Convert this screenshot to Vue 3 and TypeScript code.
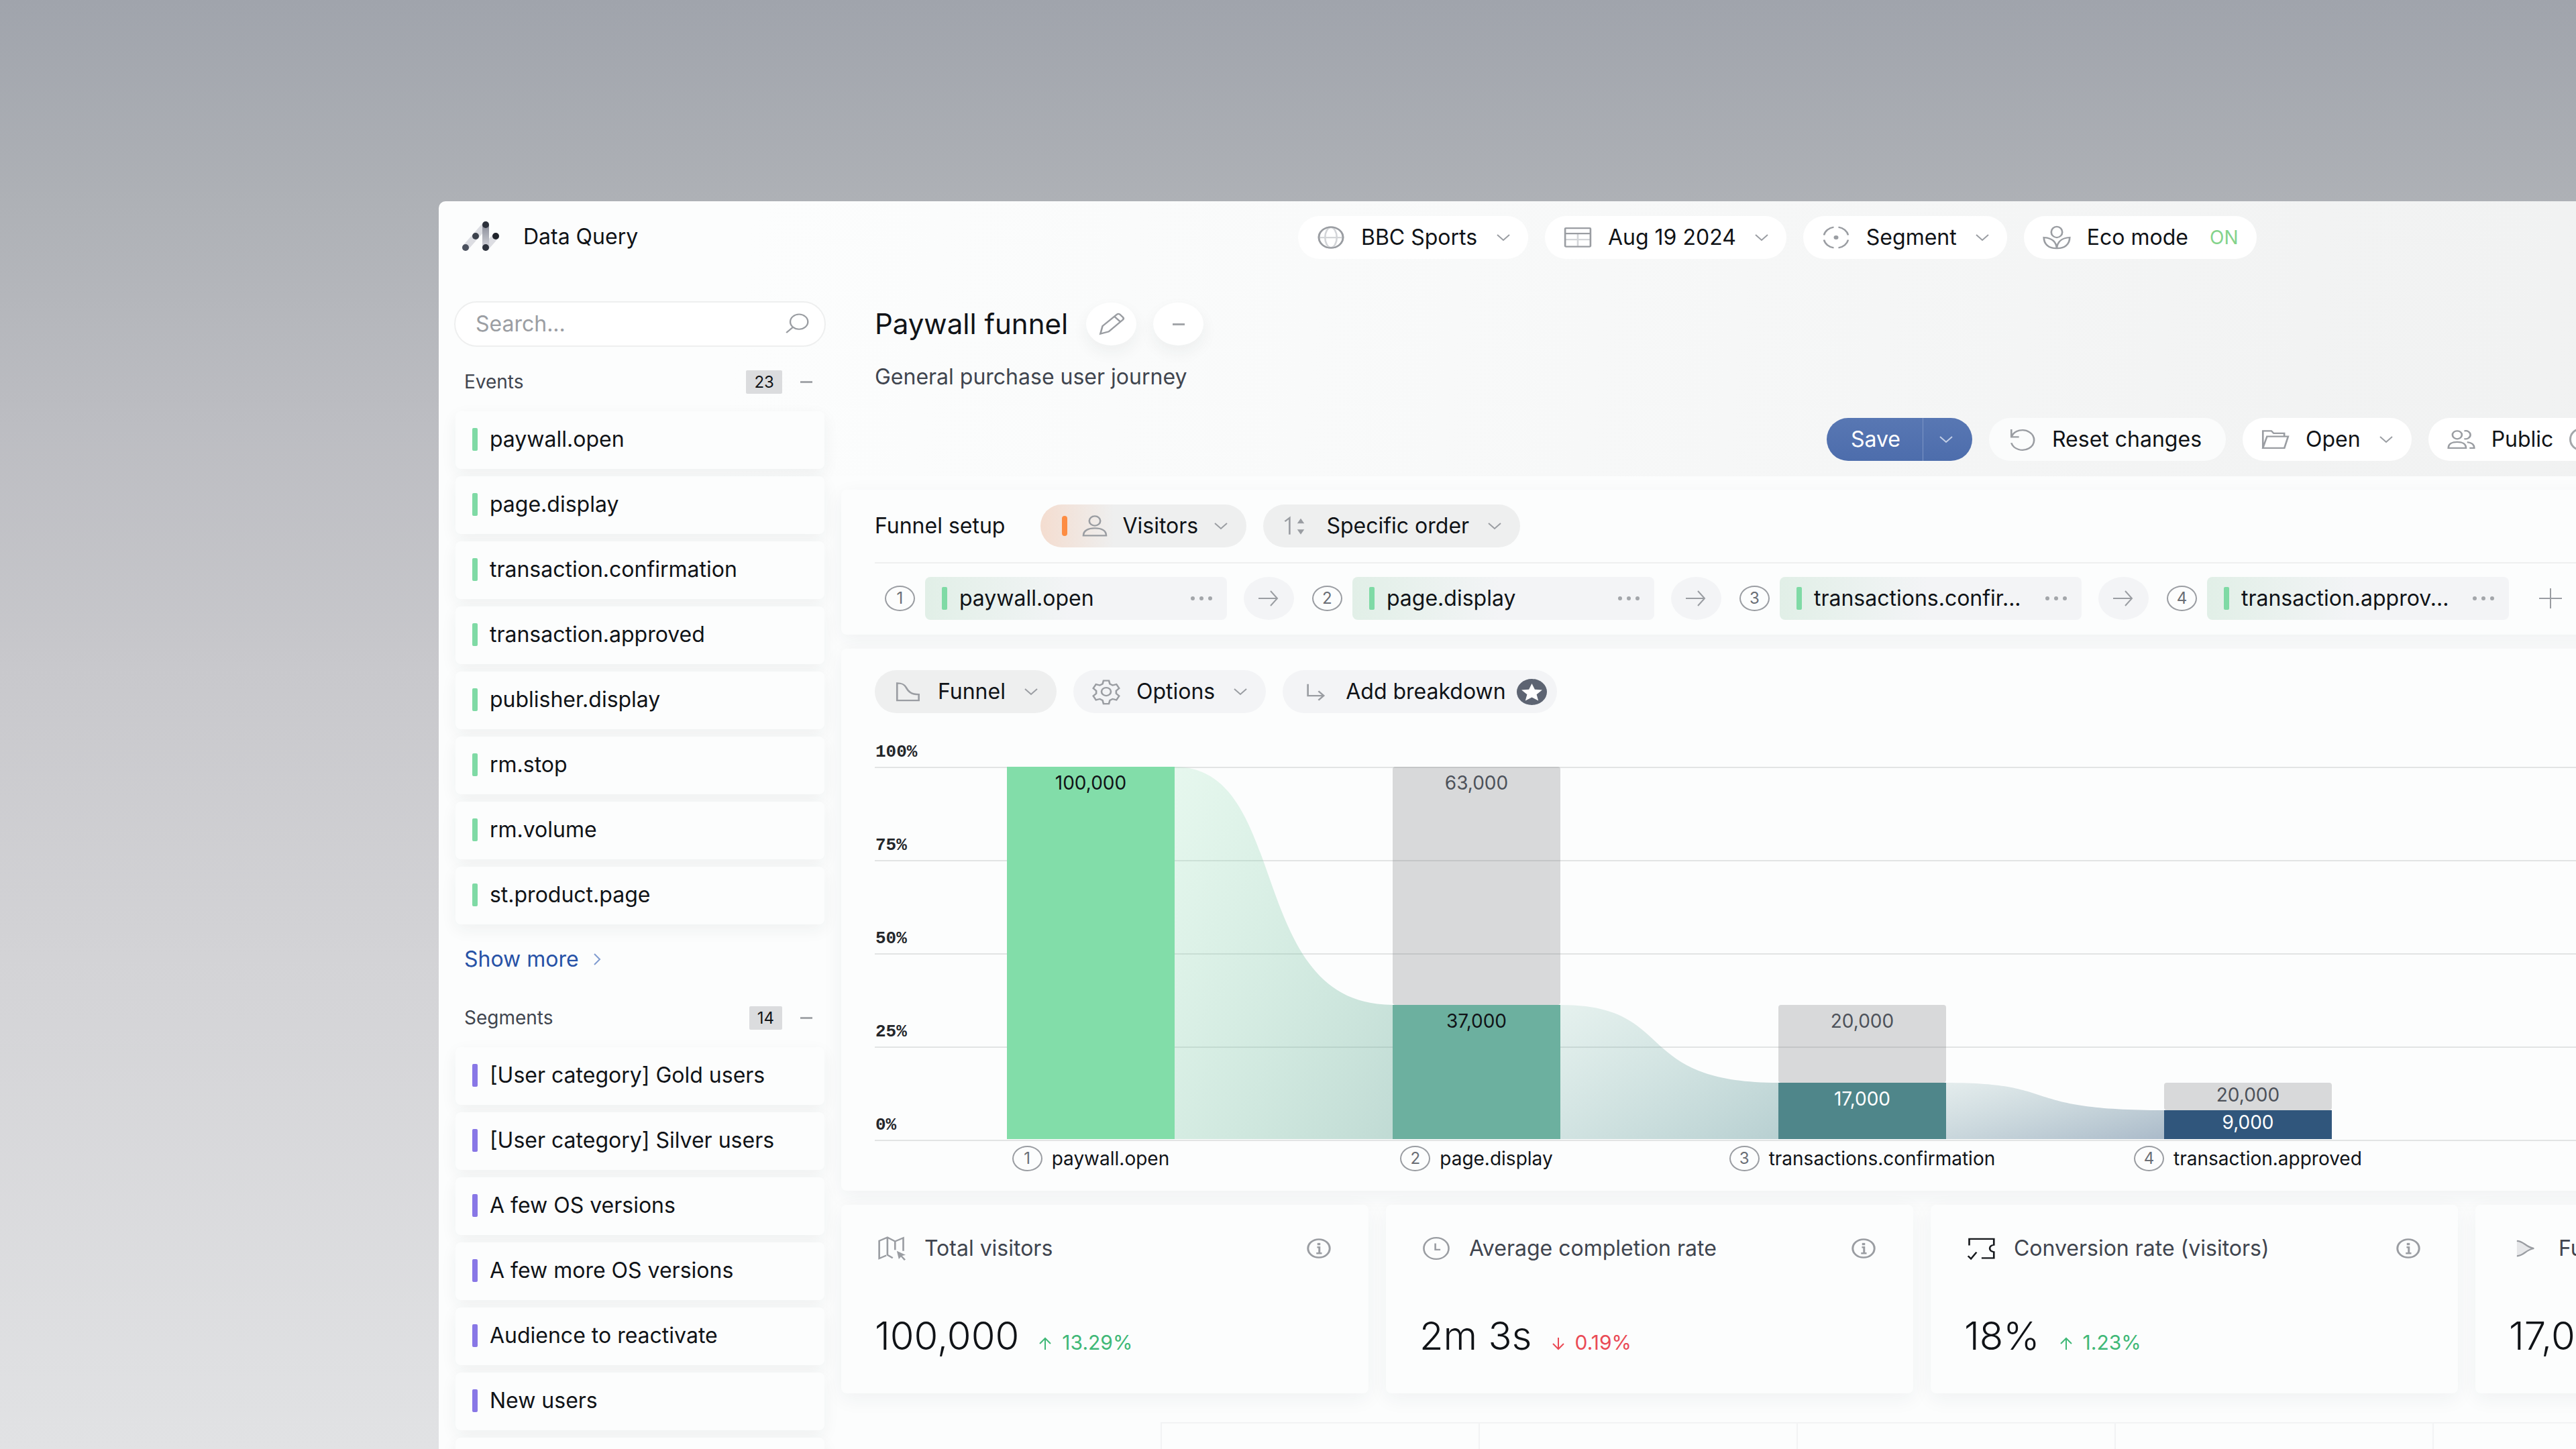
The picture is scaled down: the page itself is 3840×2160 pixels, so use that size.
<script setup lang="ts">
interface Step {
  name: string
  short: string
  top: number
  split: number
  dropped?: string
  kept: string
  color: string
  ink: string
}

interface Stat {
  title: string
  icon: string
  value: string
  change?: string
  dir?: 'up' | 'down'
}

const icons: Record<string, string> = {
  globe: '<circle cx="12" cy="12" r="10.3"/><g stroke="#d3d5d8"><ellipse cx="12" cy="12" rx="5" ry="10"/><path d="M2 12h20"/></g><circle cx="12" cy="12" r="10.3"/>',
  calendar: '<g stroke="#d3d5d8"><path d="M12 8v12.500M1.500 14h21"/></g><path d="M1.300 8h21.400"/><rect x="1.200" y="2.800" width="21.600" height="18.200" rx=".6"/>',
  target: '<path d="M10 1.700A10.300 10.300 0 0 0 1.700 9.700M14 1.700a10.300 10.300 0 0 1 8.300 8M1.700 14.300A10.300 10.300 0 0 0 10 22.300M22.300 14.300A10.300 10.300 0 0 1 14 22.300"/><circle cx="12" cy="12" r="2" fill="#9a9da2" stroke="none"/>',
  flower: '<ellipse cx="12" cy="6.600" rx="4.700" ry="5.400"/><path d="M12 22.800C11.500 16 8 12.500 1 12c0 7 4.500 11 11 10.800C18.500 23 23 19 23 12c-7 .5-10.500 4-11 10.800z"/>',
  search: '<circle cx="14" cy="9.500" r="8.300"/><path d="M8.200 15.600 2 21.800"/>',
  pencil: '<path d="M2.500 21.700 4.300 14 16.600 2.400q1.200-1 2.400 0l2.700 2.900q1 1.200 0 2.400L9.600 19.500zM14.400 4.500l5.200 5.400"/>',
  reset: '<path d="M3 2v7.500h6.500M3.200 9.200A9.900 9.900 0 1 1 3 15.500"/>',
  folder: '<path d="M1.300 20.500V3.500h7.200l2 2.400h9v3M1.300 20.500 4.800 9h18l-3.200 11.500z"/>',
  people: '<circle cx="8.500" cy="7.500" r="4"/><path d="M14.500 3.700a4 4 0 1 1 0 7.600M1 20.500c0-4 3.200-6 7.500-6s7.500 2 7.500 6zM17 14.700c3.600.3 6 2.400 6 5.800h-4"/>',
  person: '<circle cx="12" cy="7" r="4.700"/><path d="M2.300 21.500c0-5 4.200-7.300 9.700-7.300s9.700 2.300 9.700 7.300z"/>',
  order: '<path d="M2.500 7.500 6.500 4v16.500"/><path d="M16 4.500l3 5h-6zM16 20.500l3-5h-6z" fill="#9a9da2" stroke="none"/>',
  funnel: '<path d="M3 3.500v17.300h18.500v-6C15 14.800 12.500 12 10.500 7.500 9 4.500 7 3.500 3 3.500z"/>',
  gear: '<circle cx="12" cy="12" r="4"/><path d="M9.700 1h4.600l.8 3.400 2.300 1.300 3.300-1 2.300 4-2.500 2.400v2.800l2.500 2.400-2.300 4-3.300-1-2.300 1.300-.8 3.400H9.700l-.8-3.400-2.300-1.300-3.300 1-2.300-4 2.500-2.400v-2.800L1 8.700l2.300-4 3.300 1 2.300-1.300z"/>',
  branch: '<path d="M5.500 4.500V16h13M14.500 11.500 19 16l-4.500 4.500"/>',
  map: '<path d="M7.500 19 1.500 22V4.500L8.500 1l6.500 4 7-3.500v13M8.500 1v17.500l4.500 3M15 5v8.500"/><path d="M16.500 14.500l7.500 4-3 .8 3 3.700-1.200 1-2.800-3.700-1.800 2.400z" fill="#9a9da2" stroke="none"/>',
  clock: '<circle cx="12" cy="12" r="10.600"/><path d="M11.200 7v6.200h4.300"/>',
  ticket: '<g stroke="#15181c"><path d="M2 9V2.500h21v6q-3.500.6-3.500 3.500t3.500 3.500v6H12.500M1 19.500l2.500 2.800 4.700-6.500"/></g>',
  flow: '<path d="M4.500 4.500c6 0 7 6 14.500 7.500-7.500 1.500-8.500 7.500-14.500 7.500z" fill="#e6e7e9" stroke="none"/><path d="M4.500 4.500c6 0 7 6 14.500 7.500-7.500 1.500-8.500 7.500-14.500 7.500"/>',
  info: '<circle cx="12" cy="12" r="10.800" stroke-width="2"/><path d="M10.300 10.500h2.200v7.200M9.500 17.700h5.500" stroke-width="2"/><path d="M12 5.500v2.700" stroke-width="3"/>',
}

const events: string[] = [
  'paywall.open', 'page.display', 'transaction.confirmation', 'transaction.approved',
  'publisher.display', 'rm.stop', 'rm.volume', 'st.product.page',
]
const segments: string[] = [
  '[User category] Gold users', '[User category] Silver users', 'A few OS versions',
  'A few more OS versions', 'Audience to reactivate', 'New users',
]

const BAR = 250
const PITCH = 575
const FIRST = 197
const BASE = 555
const steps: Step[] = [
  { name: 'paywall.open', short: 'paywall.open', top: 0, split: 0, kept: '100,000', color: '#82dda9', ink: '#101317' },
  { name: 'page.display', short: 'page.display', top: 0, split: 355, dropped: '63,000', kept: '37,000', color: '#6cb09f', ink: '#101317' },
  { name: 'transactions.confirmation', short: 'transactions.confir...', top: 355, split: 471, dropped: '20,000', kept: '17,000', color: '#4f868a', ink: '#ffffff' },
  { name: 'transaction.approved', short: 'transaction.approv...', top: 471, split: 512, dropped: '20,000', kept: '9,000', color: '#30567c', ink: '#ffffff' },
]
const ticks: string[] = ['100%', '75%', '50%', '25%', '0%']

const barX = (i: number): number => FIRST + i * PITCH
const labelY = (top: number, bottom: number): number => top + (bottom - top < 50 ? 28 : 34)

/* Area joining the kept part of one bar to the kept part of the next one. */
function flowPath(i: number): string {
  const x0 = barX(i) + BAR
  const x1 = barX(i + 1)
  const w = x1 - x0
  const a = steps[i].split
  const b = steps[i + 1].split
  return `M${x0} ${a}C${x0 + w * 0.54} ${a} ${x0 + w * 0.32} ${b} ${x1} ${b}V${BASE}H${x0}Z`
}

const flows = [
  { from: '#82dda9', fromOp: 0.18, to: '#5fa392', toOp: 0.38 },
  { from: '#6cb09f', fromOp: 0.16, to: '#3f7f84', toOp: 0.36 },
  { from: '#4f868a', fromOp: 0.14, to: '#30567c', toOp: 0.4 },
]

const stats: Stat[] = [
  { title: 'Total visitors', icon: 'map', value: '100,000', change: '13.29%', dir: 'up' },
  { title: 'Average completion rate', icon: 'clock', value: '2m 3s', change: '0.19%', dir: 'down' },
  { title: 'Conversion rate (visitors)', icon: 'ticket', value: '18%', change: '1.23%', dir: 'up' },
  { title: 'Funnel', icon: 'flow', value: '17,000' },
]
</script>

<template>
  <div class="page">
    <div class="window">
      <header class="topbar">
        <div class="brand">
          <svg class="logo" viewBox="0 0 56 46" aria-hidden="true">
            <defs>
              <linearGradient id="stem" x1="0" y1="0" x2="0" y2="1">
                <stop offset="0" stop-color="#8a8d99" /><stop offset="1" stop-color="#d3d4da" />
              </linearGradient>
            </defs>
            <g stroke="#dcdde2" stroke-width="10" stroke-linecap="round">
              <path d="M6 39 36 5M36 39 51 22" />
            </g>
            <rect x="31" y="5" width="10" height="34" fill="url(#stem)" />
            <circle cx="6" cy="39" r="5" fill="#4b515e" /><circle cx="21" cy="22" r="5" fill="#3b414c" />
            <circle cx="36" cy="5" r="5" fill="#2c313b" /><circle cx="36" cy="39" r="5" fill="#2c313b" />
            <circle cx="51" cy="22" r="5" fill="#20242c" />
          </svg>
          <span>Data Query</span>
        </div>
        <nav class="filters" aria-label="Filters">
          <label class="pill">
            <svg class="icon" viewBox="0 0 24 24" preserveAspectRatio="none" v-html="icons.globe" />
            <select aria-label="Site"><option>BBC Sports</option></select>
            <svg class="chev" viewBox="0 0 20 10"><path d="M1 1l9 8 9-8" /></svg>
          </label>
          <button type="button" class="pill">
            <svg class="icon" viewBox="0 0 24 24" preserveAspectRatio="none" v-html="icons.calendar" />
            <span>Aug 19 2024</span>
            <svg class="chev" viewBox="0 0 20 10"><path d="M1 1l9 8 9-8" /></svg>
          </button>
          <label class="pill">
            <svg class="icon" viewBox="0 0 24 24" preserveAspectRatio="none" v-html="icons.target" />
            <select aria-label="Segment"><option>Segment</option></select>
            <svg class="chev" viewBox="0 0 20 10"><path d="M1 1l9 8 9-8" /></svg>
          </label>
          <button type="button" class="pill" aria-pressed="true">
            <svg class="icon" viewBox="0 0 24 24" preserveAspectRatio="none" v-html="icons.flower" />
            <span>Eco mode</span>
            <span class="on">ON</span>
          </button>
        </nav>
      </header>

      <div class="columns">
        <aside class="sidebar">
          <label class="search">
            <input type="text" placeholder="Search..." aria-label="Search" />
            <svg class="icon small" viewBox="0 0 24 24" preserveAspectRatio="none" v-html="icons.search" />
          </label>

          <div class="group-head">
            <span>Events</span>
            <span class="count">23</span>
            <button type="button" class="minus" aria-label="Collapse events"></button>
          </div>
          <ul class="items">
            <li v-for="e in events" :key="e"><i class="mark green"></i>{{ e }}</li>
          </ul>
          <a href="#" class="more">Show more
            <svg viewBox="0 0 10 18"><path d="M1 1l8 8-8 8" /></svg>
          </a>

          <div class="group-head">
            <span>Segments</span>
            <span class="count">14</span>
            <button type="button" class="minus" aria-label="Collapse segments"></button>
          </div>
          <ul class="items">
            <li v-for="s in segments" :key="s"><i class="mark violet"></i>{{ s }}</li>
            <li aria-hidden="true"></li>
          </ul>
        </aside>

        <main class="main">
          <div class="head">
            <div class="title-row">
              <h1>Paywall funnel</h1>
              <button type="button" class="round" aria-label="Rename">
                <svg class="icon" viewBox="0 0 24 24" preserveAspectRatio="none" v-html="icons.pencil" />
              </button>
              <button type="button" class="round" aria-label="Collapse"><i class="dash"></i></button>
            </div>
            <p class="subtitle">General purchase user journey</p>
            <div class="actions">
              <div class="save">
                <button type="button" class="save-main">Save</button>
                <button type="button" class="save-more" aria-label="More save options">
                  <svg class="chev" viewBox="0 0 20 10"><path d="M1 1l9 8 9-8" /></svg>
                </button>
              </div>
              <button type="button" class="pill faint">
                <svg class="icon" viewBox="0 0 24 24" preserveAspectRatio="none" v-html="icons.reset" />
                <span>Reset changes</span>
              </button>
              <button type="button" class="pill">
                <svg class="icon" viewBox="0 0 24 24" preserveAspectRatio="none" v-html="icons.folder" />
                <span>Open</span>
                <svg class="chev" viewBox="0 0 20 10"><path d="M1 1l9 8 9-8" /></svg>
              </button>
              <label class="pill">
                <svg class="icon" viewBox="0 0 24 24" preserveAspectRatio="none" v-html="icons.people" />
                <span>Public</span>
                <input type="checkbox" class="switch" />
              </label>
            </div>
          </div>

          <section class="card setup">
            <div class="setup-row">
              <h2>Funnel setup</h2>
              <label class="pill grey visitors">
                <i class="mark orange"></i>
                <svg class="icon" viewBox="0 0 24 24" preserveAspectRatio="none" v-html="icons.person" />
                <select aria-label="Counted unit"><option>Visitors</option></select>
                <svg class="chev" viewBox="0 0 20 10"><path d="M1 1l9 8 9-8" /></svg>
              </label>
              <label class="pill grey">
                <svg class="icon" viewBox="0 0 24 24" preserveAspectRatio="none" v-html="icons.order" />
                <select aria-label="Step order"><option>Specific order</option></select>
                <svg class="chev" viewBox="0 0 20 10"><path d="M1 1l9 8 9-8" /></svg>
              </label>
            </div>
            <div class="steps">
              <template v-for="(s, i) in steps" :key="s.name">
                <span class="num">{{ i + 1 }}</span>
                <div class="chip">
                  <i class="mark green"></i>
                  <span class="chip-name">{{ s.short }}</span>
                  <button type="button" class="dots" :aria-label="'Options for ' + s.name">
                    <svg viewBox="0 0 32 6"><circle cx="3" cy="3" r="3" /><circle cx="16" cy="3" r="3" /><circle cx="29" cy="3" r="3" /></svg>
                  </button>
                </div>
                <span v-if="i < steps.length - 1" class="arrow">
                  <svg viewBox="0 0 30 24"><path d="M0 12h28M18 1l10 11-10 11" /></svg>
                </span>
              </template>
              <button type="button" class="plus" aria-label="Add step">
                <svg viewBox="0 0 34 30"><path d="M0 15h34M17 0v30" /></svg>
              </button>
            </div>
          </section>

          <section class="card chart">
            <div class="chart-tools">
              <label class="pill grey">
                <svg class="icon" viewBox="0 0 24 24" preserveAspectRatio="none" v-html="icons.funnel" />
                <select aria-label="Chart type"><option>Funnel</option></select>
                <svg class="chev" viewBox="0 0 20 10"><path d="M1 1l9 8 9-8" /></svg>
              </label>
              <button type="button" class="pill cool">
                <svg class="icon" viewBox="0 0 24 24" preserveAspectRatio="none" v-html="icons.gear" />
                <span>Options</span>
                <svg class="chev" viewBox="0 0 20 10"><path d="M1 1l9 8 9-8" /></svg>
              </button>
              <button type="button" class="pill cool add">
                <svg class="icon" viewBox="0 0 24 24" preserveAspectRatio="none" v-html="icons.branch" />
                <span>Add breakdown</span>
                <svg class="star" viewBox="0 0 45 39">
                  <ellipse cx="22.500" cy="19.500" rx="22.500" ry="19.500" fill="#5d6472" />
                  <path d="M22.500 7l4.400 8.700 11 .9-8.300 6.600 2.600 9.300-9.700-4.900-9.700 4.900 2.600-9.300-8.300-6.600 11-.9z" fill="#fff" />
                </svg>
              </button>
            </div>
            <svg class="plot" height="600" aria-label="Funnel chart">
              <defs>
                <linearGradient v-for="(f, i) in flows" :id="'flow' + i" :key="i" x1="0" y1="0" x2="1" y2="1">
                  <stop offset="0" :stop-color="f.from" :stop-opacity="f.fromOp" />
                  <stop offset="1" :stop-color="f.to" :stop-opacity="f.toOp" />
                </linearGradient>
              </defs>
              <g transform="translate(0 40)">
                <g v-for="(t, i) in ticks" :key="t">
                  <rect x="0" :y="i * 139" width="100%" height="2" fill="#e2e4e4" />
                  <text class="tick" x="1" :y="i * 139 - 15">{{ t }}</text>
                </g>
                <path v-for="(f, i) in flows" :key="i" :d="flowPath(i)" :fill="`url(#flow${i})`" />
                <g v-for="(s, i) in steps" :key="s.name">
                  <template v-if="s.dropped">
                    <rect :x="barX(i)" :y="s.top" :width="BAR" :height="s.split - s.top" rx="4" fill="#5a5d60" fill-opacity=".22" />
                    <text class="val" :x="barX(i) + BAR / 2" :y="labelY(s.top, s.split)" fill="#4d525a">{{ s.dropped }}</text>
                  </template>
                  <rect :x="barX(i)" :y="s.split" :width="BAR" :height="BASE - s.split" :fill="s.color" />
                  <text class="val" :x="barX(i) + BAR / 2" :y="labelY(s.split, BASE)" :fill="s.ink">{{ s.kept }}</text>
                </g>
              </g>
            </svg>
            <div class="names">
              <div v-for="(s, i) in steps" :key="s.name" class="name">
                <span class="num">{{ i + 1 }}</span>{{ s.name }}
              </div>
            </div>
          </section>

          <div class="stats">
            <section v-for="s in stats" :key="s.title" class="card stat">
              <div class="stat-head">
                <svg class="icon" viewBox="0 0 24 24" preserveAspectRatio="none" v-html="icons[s.icon]" />
                <h3>{{ s.title }}</h3>
                <svg class="icon info" viewBox="0 0 24 24" preserveAspectRatio="none" v-html="icons.info" />
              </div>
              <div class="stat-value">
                <strong>{{ s.value }}</strong>
                <span v-if="s.change" class="change" :class="s.dir">
                  <svg viewBox="0 0 18 18">
                    <path :d="s.dir === 'up' ? 'M9 18V1M1 9l8-8 8 8' : 'M9 0v17M1 9l8 8 8-8'" />
                  </svg>
                  {{ s.change }}
                </span>
              </div>
            </section>
          </div>

          <div class="sheet">
            <div v-for="n in 6" :key="n" class="cell"></div>
          </div>
        </main>
      </div>
    </div>
  </div>
</template>

<style>
body {
  background: #e1e2e4;
}
</style>

<style scoped>
.page {
  box-sizing: border-box;
  height: 100vh;
  overflow: hidden;
  padding-top: 300px;
  background: linear-gradient(180deg, #a0a4ac 0%, #aeb1b6 14%, #bbbcc1 28%, #c8c8cc 46%, #d3d3d6 66%, #e1e2e4 100%);
  font-family: Inter, "Liberation Sans", sans-serif;
  font-size: 32px;
  line-height: 40px;
  color: #101317;
}
.page *,
.page *::before {
  box-sizing: border-box;
}
.window {
  margin-left: 17.03vw;
  margin-right: -662px;
  min-height: 2000px;
  border-radius: 10px 0 0 0;
  background: linear-gradient(97deg, #fcfdfd 12%, #f9fafa 34%, #f2f3f3 72%, #eff0f0 100%) 0 0 / 100% 410px no-repeat, #fcfdfd;
}
h1, h2, h3, p, ul {
  margin: 0;
  padding: 0;
  font-weight: 400;
}
button, select, input {
  margin: 0;
  padding: 0;
  border: 0;
  background: none;
  font: inherit;
  color: inherit;
}
select {
  appearance: none;
  line-height: 40px;
}
svg {
  flex: none;
  fill: none;
  overflow: visible;
}
.icon {
  width: 42px;
  height: 36px;
  stroke: #9a9da2;
  stroke-width: 1.5px;
}
.icon.small {
  width: 38px;
  height: 32px;
}
.icon.info {
  width: 36px;
  height: 30px;
}
.chev {
  width: 20px;
  height: 10px;
  margin-left: 4px;
  stroke: #9a9da2;
  stroke-width: 2px;
}
.topbar {
  display: flex;
  align-items: flex-start;
  padding: 22px 0 0 34px;
  height: 108px;
}
.brand {
  display: flex;
  align-items: center;
  gap: 36px;
  flex: 0 0 1247px;
  height: 64px;
  padding-bottom: 2px;
}
.logo {
  width: 56px;
  height: 46px;
}
.filters {
  display: flex;
  gap: 25px;
}
.pill {
  display: flex;
  align-items: center;
  gap: 24px;
  height: 64px;
  padding: 0 28px;
  border-radius: 32px;
  background: #fff;
  white-space: nowrap;
}
.filters .pill {
  padding: 0 27px 0 28px;
}
.pill.faint {
  padding-right: 36px;
  background: #fbfcfc;
}
.pill.grey {
  background: #eeefef;
}
.pill.cool {
  background: #f3f4f6;
}
.on {
  margin-left: 8px;
  font-size: 28px;
  color: #84d38b;
}
.columns {
  display: flex;
}
.sidebar {
  flex: 0 0 600px;
  min-width: 0;
  padding: 41px 25px 0;
}
.search {
  display: flex;
  align-items: center;
  height: 68px;
  margin: 0 -2px;
  padding: 0 22px 0 30px;
  border: 2px solid #eeefef;
  border-radius: 34px;
  background: #fff;
}
.search input {
  flex: 1;
  width: 100%;
  min-width: 0;
}
.search input::placeholder {
  color: #9b9ea3;
  opacity: 1;
}
.group-head {
  display: flex;
  align-items: center;
  height: 36px;
  margin: 34px 18px 26px 13px;
  font-size: 28px;
  color: #40454f;
}
.count {
  margin-left: auto;
  padding: 0 12px;
  border-radius: 2px;
  background: #dbdcde;
  font-size: 24px;
  line-height: 35px;
  color: #101317;
}
.minus {
  width: 18px;
  height: 3px;
  margin-left: 27px;
  background: #a3a6aa;
}
.items {
  display: flex;
  flex-direction: column;
  gap: 11px;
  list-style: none;
}
.items li {
  display: flex;
  align-items: center;
  gap: 18px;
  height: 86px;
  padding: 0 0 2px 25px;
  border-radius: 8px;
  background: #fcfdfd;
  box-shadow: 0 8px 24px rgba(40, 50, 50, 0.06);
}
.mark {
  flex: none;
  width: 8px;
  height: 34px;
  border-radius: 2px;
}
.green {
  background: #7fdaa5;
}
.violet {
  background: #8877e6;
}
.orange {
  height: 30px;
  border-radius: 4px;
  background: #fd8c42;
}
.more {
  display: flex;
  align-items: center;
  gap: 22px;
  height: 40px;
  margin: 32px 13px 49px;
  color: #2752a6;
  text-decoration: none;
}
.more svg {
  width: 10px;
  height: 18px;
  stroke: #7f9bd0;
  stroke-width: 2px;
}
.main {
  flex: 1;
  min-width: 0;
  padding-right: 26px;
}
.head {
  padding: 43px 0 43px 50px;
}
.title-row {
  display: flex;
  align-items: center;
  gap: 25px;
}
h1 {
  margin-right: 2px;
  font-size: 42px;
  line-height: 64px;
}
.round {
  display: flex;
  align-items: center;
  justify-content: center;
  width: 75px;
  height: 64px;
  border-radius: 50%;
  background: #fff;
  box-shadow: 0 10px 24px rgba(40, 50, 50, 0.06);
}
.dash {
  width: 18px;
  height: 3px;
  background: #a3a6aa;
}
.subtitle {
  margin-top: 27px;
  color: #40454f;
}
.actions {
  display: flex;
  gap: 25px;
  margin: 41px 0 0 1419px;
}
.save {
  display: flex;
  height: 64px;
  border-radius: 32px;
  background: linear-gradient(#5877b3, #4d6dac);
  color: #fff;
}
.save-main {
  padding: 0 33px 0 36px;
  border-right: 1px solid #7c95c5;
}
.save-more {
  display: flex;
  align-items: center;
  padding: 0 29px 0 20px;
}
.save-more .chev {
  stroke: #c3cfe6;
}
.switch {
  appearance: none;
  width: 75px;
  height: 34px;
  border: 3px solid #a3a6aa;
  border-radius: 17px;
}
.card {
  border-radius: 8px;
  background: #fcfdfd;
  box-shadow: 0 8px 30px rgba(40, 50, 60, 0.06);
}
.setup {
  padding: 22px 0 22px 50px;
}
.setup-row {
  display: flex;
  align-items: center;
  gap: 25px;
  padding-bottom: 22px;
  border-bottom: 2px solid #eeefef;
}
h2 {
  margin-right: 28px;
  font-size: 32px;
}
.pill.visitors {
  padding-left: 32px;
  gap: 20px;
  background: linear-gradient(90deg, #f4ddd0 0, #eeefef 110px);
}
.visitors .chev {
  margin-left: 4px;
}
.steps {
  display: flex;
  align-items: center;
  margin: 20px 0 0 15px;
}
.num {
  display: flex;
  align-items: center;
  justify-content: center;
  flex: none;
  width: 45px;
  height: 38px;
  border: 2px solid #9a9da2;
  border-radius: 50%;
  font-size: 24px;
  line-height: 30px;
  color: #6a6e75;
}
.chip {
  display: flex;
  align-items: center;
  flex: none;
  gap: 18px;
  width: 450px;
  height: 64px;
  margin: 0 25px 0 15px;
  padding: 0 22px 0 25px;
  border-radius: 8px;
  background: linear-gradient(90deg, #e1efe7 0, #f3f4f6 220px);
}
.chip-name {
  flex: 1;
  white-space: nowrap;
}
.dots {
  display: flex;
}
.dots svg {
  width: 32px;
  height: 6px;
  fill: #a3a6aa;
}
.arrow {
  display: flex;
  align-items: center;
  justify-content: center;
  width: 75px;
  height: 64px;
  margin-right: 27px;
  border-radius: 50%;
  background: #f3f4f6;
}
.arrow svg,
.plus svg {
  display: block;
  width: 30px;
  height: 24px;
  stroke: #9a9da2;
  stroke-width: 2px;
}
.plus {
  margin-left: 20px;
}
.plus svg {
  width: 34px;
  height: 30px;
}
.chart {
  margin-top: 21px;
  padding: 32px 0 28px 50px;
}
.chart-tools {
  display: flex;
  gap: 25px;
}
.add {
  padding-right: 15px;
}
.star {
  width: 45px;
  height: 39px;
  margin-left: -8px;
}
.plot {
  display: block;
  width: 100%;
  margin-top: 40px;
}
.tick {
  font: bold 26px "Liberation Mono", monospace;
  fill: #24272b;
}
.val {
  font-size: 28px;
  text-anchor: middle;
}
.names {
  display: flex;
  gap: 325px;
  margin: 4px 0 0 197px;
}
.name {
  display: flex;
  align-items: center;
  justify-content: center;
  flex: none;
  width: 250px;
  gap: 14px;
  height: 40px;
  font-size: 28px;
  white-space: nowrap;
}
.stats {
  display: grid;
  grid-template-columns: repeat(4, 1fr);
  gap: 26px;
  margin-top: 21px;
}
.stat {
  padding: 45px 56px 44px 50px;
}
.stat-head {
  display: flex;
  align-items: center;
  gap: 28px;
}
.stat-head > .icon:first-child {
  margin-left: 4px;
}
h3 {
  flex: 1;
  font-size: 32px;
  white-space: nowrap;
  color: #40454f;
}
.stat-value {
  display: flex;
  align-items: baseline;
  gap: 30px;
  margin-top: 68px;
}
.stat-value strong {
  font-size: 58px;
  font-weight: 300;
  line-height: 84px;
}
.change {
  display: flex;
  align-items: baseline;
  gap: 16px;
  font-size: 30px;
}
.change svg {
  width: 18px;
  height: 18px;
  stroke-width: 2px;
  stroke: currentColor;
}
.up {
  color: #3fb877;
}
.down {
  color: #ea4a55;
}
.sheet {
  display: grid;
  grid-template-columns: repeat(6, 474px);
  margin: 43px 0 0 476px;
  border-top: 2px solid #f2f3f4;
}
.cell {
  height: 200px;
  border-left: 2px solid #f2f3f4;
}
</style>
